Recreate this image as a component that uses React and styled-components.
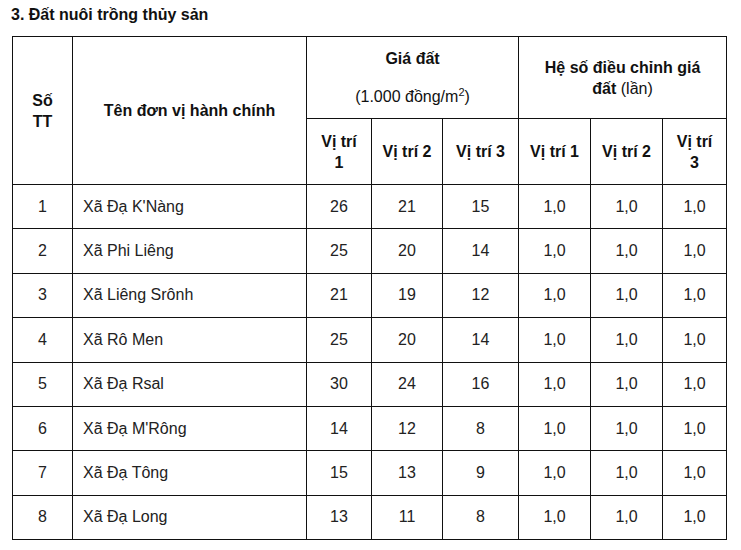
import React from "react";
import styled, { createGlobalStyle } from "styled-components";

const Global = createGlobalStyle`
  html, body { margin: 0; padding: 0; background: #fff; }
  body { font-family: "Liberation Sans", Arial, sans-serif; color: #222; }
`;

const Page = styled.div`
  padding: 5px 15px 0 12px;
  width: 714px;
`;

const Title = styled.h3`
  margin: 0 0 11px -1px;
  font-size: 16px;
  font-weight: bold;
  line-height: 20px;
  color: #111;
`;

const Table = styled.table`
  border-collapse: collapse;
  table-layout: fixed;
  width: 714px;
  font-size: 16px;
`;

const Th = styled.th`
  border: 1px solid #111;
  font-weight: bold;
  text-align: center;
  vertical-align: middle;
  padding: 0 ${(p) => p.$pad || 10}px;
  line-height: 21px;
  height: ${(p) => p.$h || 0}px;
  color: #111;
`;

const Td = styled.td`
  border: 1px solid #111;
  text-align: ${(p) => (p.$left ? "left" : "center")};
  padding: ${(p) => (p.$left ? "0 10px" : "0 4px")};
  height: 43.4px;
  vertical-align: middle;
  line-height: 20px;
`;

const Normal = styled.span`
  font-weight: normal;
`;

const Sup = styled.sup`
  font-size: 11px;
  line-height: 0;
  vertical-align: 6px;
`;

const Para = styled.div`
  font-weight: ${(p) => (p.$normal ? "normal" : "bold")};
  & + & {
    margin-top: 17px;
  }
`;

const cols = [60, 234, 65, 71, 76, 72, 72, 64];

const rows = [
  ["1", "Xã Đạ K'Nàng", "26", "21", "15"],
  ["2", "Xã Phi Liêng", "25", "20", "14"],
  ["3", "Xã Liêng Srônh", "21", "19", "12"],
  ["4", "Xã Rô Men", "25", "20", "14"],
  ["5", "Xã Đạ Rsal", "30", "24", "16"],
  ["6", "Xã Đạ M'Rông", "14", "12", "8"],
  ["7", "Xã Đạ Tông", "15", "13", "9"],
  ["8", "Xã Đạ Long", "13", "11", "8"],
];

export default function App() {
  return (
    <Page>
      <Global />
      <Title>3. Đất nuôi trồng thủy sản</Title>
      <Table>
        <colgroup>
          {cols.map((w, i) => (
            <col key={i} style={{ width: w }} />
          ))}
        </colgroup>
        <thead>
          <tr>
            <Th rowSpan={2}>Số<br />TT</Th>
            <Th rowSpan={2}>Tên đơn vị hành chính</Th>
            <Th colSpan={3} $h={81}>
              <Para>Giá đất</Para>
              <Para $normal>(1.000 đồng/m<Sup>2</Sup>)</Para>
            </Th>
            <Th colSpan={3} $h={81} $pad={20}>
              Hệ số điều chỉnh giá đất <Normal>(lần)</Normal>
            </Th>
          </tr>
          <tr>
            <Th $h={65}>Vị trí 1</Th>
            <Th>Vị trí 2</Th>
            <Th>Vị trí 3</Th>
            <Th>Vị trí 1</Th>
            <Th>Vị trí 2</Th>
            <Th>Vị trí 3</Th>
          </tr>
        </thead>
        <tbody>
          {rows.map((r) => (
            <tr key={r[0]}>
              <Td>{r[0]}</Td>
              <Td $left>{r[1]}</Td>
              <Td>{r[2]}</Td>
              <Td>{r[3]}</Td>
              <Td>{r[4]}</Td>
              <Td>1,0</Td>
              <Td>1,0</Td>
              <Td>1,0</Td>
            </tr>
          ))}
        </tbody>
      </Table>
    </Page>
  );
}
